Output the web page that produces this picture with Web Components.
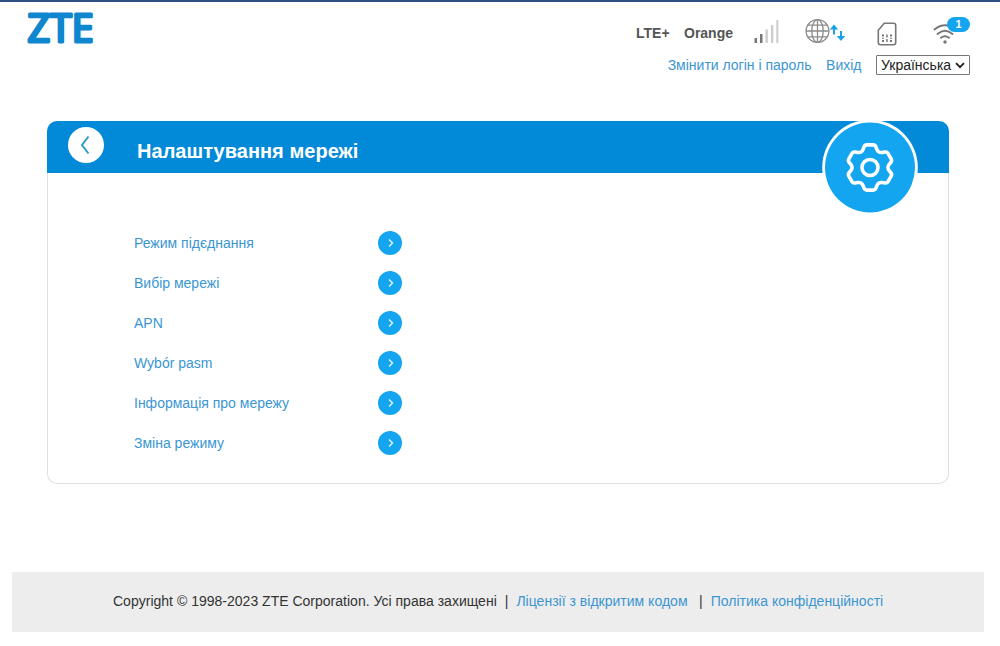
<!DOCTYPE html>
<html lang="uk">
<head>
<meta charset="utf-8">
<title>ZTE</title>
<style>
  body {
    margin: 0;
    background: #fff;
    color: #333;
    font-family: "Liberation Sans", Arial, sans-serif;
    font-size: 14px;
    --link: #3b96d2;
    --accent: #14a5f0;
    --bar: #028ad9;
  }
</style>
</head>
<body>
<router-page>
  <page-header slot="header">
    <zte-logo slot="logo"></zte-logo>
    <status-bar slot="status" network="LTE+" operator="Orange" clients="1"></status-bar>
    <user-links slot="links" language="Українська"></user-links>
  </page-header>
  <settings-card heading="Налаштування мережі">
    <menu-row>Режим підєднання</menu-row>
    <menu-row>Вибір мережі</menu-row>
    <menu-row>APN</menu-row>
    <menu-row>Wybór pasm</menu-row>
    <menu-row>Інформація про мережу</menu-row>
    <menu-row>Зміна режиму</menu-row>
  </settings-card>
  <page-footer slot="footer"></page-footer>
</router-page>

<script>
class RouterPage extends HTMLElement {
  constructor() {
    super();
    this.attachShadow({ mode: 'open' });
    this.shadowRoot.innerHTML = `
    <style>
      :host {
        box-sizing: border-box;
        display: flex;
        flex-direction: column;
        height: 646px;
        overflow: hidden;
        border-top: 2px solid #2f4f86;
      }
      main { padding: 0 51px 0 47px; flex: 1; }
    </style>
    <slot name="header"></slot>
    <main><slot></slot></main>
    <slot name="footer"></slot>`;
  }
}

class PageHeader extends HTMLElement {
  constructor() {
    super();
    this.attachShadow({ mode: 'open' });
    this.shadowRoot.innerHTML = `
    <style>
      :host {
        box-sizing: border-box;
        display: flex;
        justify-content: space-between;
        align-items: flex-start;
        height: 119px;
        padding: 0 30px 0 26px;
      }
      .right {
        display: flex;
        flex-direction: column;
        align-items: flex-end;
        padding-top: 9px;
      }
    </style>
    <slot name="logo"></slot>
    <div class="right">
      <slot name="status"></slot>
      <slot name="links"></slot>
    </div>`;
  }
}

class ZteLogo extends HTMLElement {
  constructor() {
    super();
    this.attachShadow({ mode: 'open' });
    this.shadowRoot.innerHTML = `
    <style>
      :host { display: block; }
      svg { display: block; overflow: visible; }
      text {
        font-family: "Open Sans", "Noto Sans", sans-serif;
        font-size: 37.6px;
        fill: #0f87cf;
        stroke: #0f87cf;
        stroke-width: 3;
        stroke-linejoin: round;
      }
    </style>
    <svg width="90" height="60" viewBox="0 0 90 60">
      <text x="1.5" y="40.3" textLength="66" lengthAdjust="spacingAndGlyphs">ZTE</text>
    </svg>`;
  }
}

class StatusBar extends HTMLElement {
  constructor() {
    super();
    this.attachShadow({ mode: 'open' });
  }

  connectedCallback() {
    this.shadowRoot.innerHTML = `
    <style>
      :host {
        display: flex;
        align-items: center;
        height: 44px;
        color: #555;
        font-weight: bold;
      }
      .network { width: 48px; }
      .operator { width: 69px; }
      svg { display: block; }
      .signal { margin: -2px 26px 0 0; }
      .globe { margin: -4px 31px 0 0; }
      .sim { margin: 2px 35px 0 0; }
      .wifi { position: relative; width: 38px; height: 32px; }
      .wifi svg { margin-top: 5px; }
      .badge {
        position: absolute;
        top: 0;
        right: 0;
        width: 23px;
        height: 15px;
        border-radius: 8px;
        background: var(--accent);
        color: #fff;
        font-size: 11px;
        line-height: 15px;
        text-align: center;
      }
    </style>
    <span class="network">${this.getAttribute('network')}</span>
    <span class="operator">${this.getAttribute('operator')}</span>
    <svg class="signal" width="26" height="24" viewBox="0 0 26 24">
      <g fill="#777"><rect x="1.5" y="18" width="2.5" height="5"/><rect x="7" y="14" width="2.5" height="9"/></g>
      <g fill="#ccc"><rect x="12.5" y="9.5" width="2.3" height="13.5"/><rect x="18" y="5" width="2.3" height="18"/><rect x="23.3" y="0" width="2" height="23"/></g>
    </svg>
    <svg class="globe" width="41" height="26" viewBox="0 0 41 26">
      <g fill="none" stroke="#8c8c8c" stroke-width="1.3">
        <circle cx="12.5" cy="13" r="11.4"/>
        <ellipse cx="12.5" cy="13" rx="5.7" ry="11.4"/>
        <path d="M12.5 1.6v22.8M1 13h23M2.8 7.2h19.4M2.8 18.8h19.4"/>
      </g>
      <g fill="none" stroke="#1ba1e8" stroke-width="2">
        <path d="M29 16.5V10M36 13v7"/>
      </g>
      <g fill="#1ba1e8"><path d="M29 6.5l4.2 5h-8.4zM36 23l-4.2-5h8.4z"/></g>
    </svg>
    <svg class="sim" width="20" height="24" viewBox="0 0 20 24">
      <path d="M7.2 1.3h9.3q2.2 0 2.2 2.2v17q0 2.2-2.2 2.2h-13q-2.2 0-2.2-2.2V8.2z" fill="none" stroke="#777" stroke-width="1.6" stroke-linejoin="round"/>
      <path d="M5 12.5h2v2H5zM9.2 12.5h1.5v3H9.2zM13 12.5h2v2h-2zM5 15.7h2v1H5zM13 15.7h2v1h-2zM5 18h2v2H5zM9.2 17h1.5v3H9.2zM13 18h2v2h-2z" fill="#777"/>
    </svg>
    <div class="wifi">
      <svg width="26" height="24" viewBox="0 0 26 24">
        <g fill="none" stroke="#777" stroke-width="1.9" stroke-linecap="round">
          <path d="M2.5 7.5Q13-1 23.5 7.5M5.5 12Q13 5.5 20.5 12M9 15.7Q13 12.7 17 15.7"/>
        </g>
        <circle cx="13" cy="20" r="1.7" fill="#777"/>
      </svg>
      <span class="badge">${this.getAttribute('clients')}</span>
    </div>`;
  }
}

class UserLinks extends HTMLElement {
  constructor() {
    super();
    this.attachShadow({ mode: 'open' });
  }

  connectedCallback() {
    this.shadowRoot.innerHTML = `
    <style>
      :host {
        display: flex;
        align-items: center;
        gap: 14.5px;
        height: 20px;
      }
      a { color: var(--link); text-decoration: none; }
      button {
        box-sizing: border-box;
        display: flex;
        align-items: center;
        justify-content: space-between;
        width: 94px;
        height: 20px;
        padding: 0 4px;
        border: 1px solid #767676;
        border-radius: 1px;
        background: #fff;
        color: #222;
        font: inherit;
      }
    </style>
    <a>Змінити логін і пароль</a>
    <a>Вихід</a>
    <button>${this.getAttribute('language')}
      <svg width="10" height="7" viewBox="0 0 10 7"><path d="M1 1.2l4 4 4-4" fill="none" stroke="#222" stroke-width="1.9"/></svg>
    </button>`;
  }
}

class SettingsCard extends HTMLElement {
  constructor() {
    super();
    this.attachShadow({ mode: 'open' });
  }

  connectedCallback() {
    this.shadowRoot.innerHTML = `
    <style>
      :host {
        box-sizing: border-box;
        display: block;
        position: relative;
        height: 363px;
        border: 1px solid #e0e0e0;
        border-top: 0;
        border-radius: 10px;
      }
      header {
        box-sizing: border-box;
        display: flex;
        height: 52px;
        margin: 0 -1px;
        padding-left: 20px;
        border-radius: 10px 10px 0 0;
        background: var(--bar);
      }
      .back { margin-top: 5px; }
      h1 {
        margin: 18px 0 0 32px;
        color: #fff;
        font-size: 20px;
        line-height: 24px;
        letter-spacing: 0.03px;
      }
      .badge {
        position: absolute;
        top: -2px;
        right: 29px;
      }
      nav {
        display: flex;
        flex-direction: column;
        padding: 50px 0 0 86px;
      }
    </style>
    <header>
      <svg class="back" width="38" height="38" viewBox="0 0 38 38">
        <circle cx="19" cy="19" r="18" fill="#fff"/>
        <path d="M21.5 10.5l-6.5 8.5 6.5 8.5" fill="none" stroke="#2f9bc9" stroke-width="2"/>
      </svg>
      <h1>${this.getAttribute('heading')}</h1>
    </header>
    <svg class="badge" width="97" height="97" viewBox="-48 -48.5 97 97">
      <circle r="47.8" fill="#fff"/>
      <circle r="45" fill="#14a5f0"/>
      <g fill="none" stroke="#fff" stroke-width="3.6" stroke-linejoin="round">
        <path d="${this._gearPath()}"/>
        <circle r="8"/>
      </g>
    </svg>
    <nav><slot></slot></nav>`;
  }

  // six teeth, every corner softened with a quadratic curve
  _gearPath() {
    const tooth = [[-7.6, -16.3], [-5.2, -22.6], [5.2, -22.6], [7.6, -16.3]];
    const points = [];
    for (let i = 0; i < 6; i++) {
      const a = i * Math.PI / 3;
      tooth.forEach(([x, y]) => {
        points.push([x * Math.cos(a) - y * Math.sin(a), x * Math.sin(a) + y * Math.cos(a)]);
      });
    }
    const toward = (p, q) => {
      const d = Math.hypot(q[0] - p[0], q[1] - p[1]);
      const r = Math.min(2, d / 2);
      return [p[0] + (q[0] - p[0]) * r / d, p[1] + (q[1] - p[1]) * r / d];
    };
    return points.map((p, i) => {
      const prev = points[(i + points.length - 1) % points.length];
      const next = points[(i + 1) % points.length];
      return `${i ? 'L' : 'M'}${toward(p, prev)} Q${p} ${toward(p, next)}`;
    }).join(' ') + 'Z';
  }
}

class MenuRow extends HTMLElement {
  constructor() {
    super();
    this.attachShadow({ mode: 'open' });
    this.shadowRoot.innerHTML = `
    <style>
      :host {
        display: flex;
        align-items: center;
        justify-content: space-between;
        width: 268px;
        height: 40px;
        color: var(--link);
      }
      svg { display: block; }
    </style>
    <slot></slot>
    <svg width="24" height="24" viewBox="0 0 24 24">
      <circle cx="12" cy="12" r="12" fill="#14a5f0"/>
      <path d="M11 8.5l3.5 3.5-3.5 3.5" fill="none" stroke="#d9f1ff" stroke-width="1.5"/>
    </svg>`;
  }
}

class PageFooter extends HTMLElement {
  constructor() {
    super();
    this.attachShadow({ mode: 'open' });
    this.shadowRoot.innerHTML = `
    <style>
      :host {
        box-sizing: border-box;
        display: flex;
        align-items: center;
        height: 60px;
        margin: 0 16px 14px 12px;
        padding: 0 0 2px 101px;
        background: #ededed;
        white-space: nowrap;
        letter-spacing: 0.01px;
      }
      a { color: var(--link); }
      .first { margin: 0 8px; }
      .second { margin: 0 8px 0 11.5px; }
    </style>
    <span>Copyright © 1998-2023 ZTE Corporation. Усі права захищені</span>
    <span class="first">|</span>
    <a>Ліцензії з відкритим кодом</a>
    <span class="second">|</span>
    <a>Політика конфіденційності</a>`;
  }
}

customElements.define('router-page', RouterPage);
customElements.define('page-header', PageHeader);
customElements.define('zte-logo', ZteLogo);
customElements.define('status-bar', StatusBar);
customElements.define('user-links', UserLinks);
customElements.define('settings-card', SettingsCard);
customElements.define('menu-row', MenuRow);
customElements.define('page-footer', PageFooter);
</script>
</body>
</html>
